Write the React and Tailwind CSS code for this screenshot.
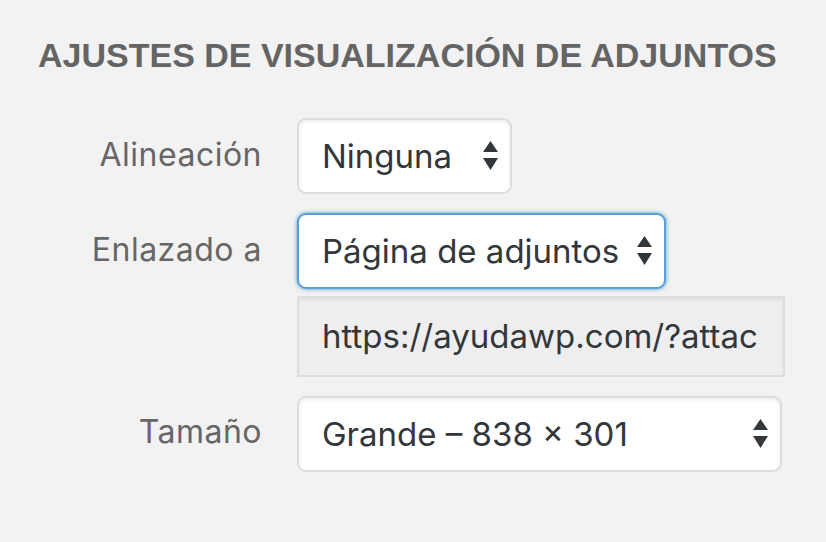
import React from "react";

function Arrows() {
  return (
    <svg width="15" height="30" viewBox="0 0 15 30" className="shrink-0">
      <polygon points="7.5,0 15,11 0,11" fill="#32373c" />
      <polygon points="0,17 15,17 7.5,29" fill="#32373c" />
    </svg>
  );
}

function Select({ text, width, focus }) {
  return (
    <div
      className={
        "flex h-[76px] items-center justify-between rounded-[9px] bg-white pl-[23px] pr-[12px] " +
        (focus
          ? "border-2 border-[#5b9dd9] shadow-[0_0_4px_rgba(30,140,190,0.8)]"
          : "border-2 border-[#dddddd] shadow-[inset_0_2px_4px_rgba(0,0,0,0.07)]")
      }
      style={{ width }}
    >
      <span className="whitespace-nowrap text-[33px] leading-none text-[#32373c]">{text}</span>
      <Arrows />
    </div>
  );
}

function Label({ children, pt }) {
  return (
    <div
      className={
        "w-[224px] shrink-0 text-right text-[32px] leading-none tracking-[0.5px] text-[#666666] " + pt
      }
    >
      {children}
    </div>
  );
}

export default function App() {
  return (
    <div
      className="h-[542px] w-[826px] overflow-hidden bg-[#f2f2f2] pl-[38px]"
      style={{ fontFamily: "Inter, 'Liberation Sans', sans-serif" }}
    >
      <h2
        className="pt-[38px] text-[34px] font-bold leading-none text-[#646464]"
        style={{ fontFamily: "'Liberation Sans', Arial, sans-serif" }}
      >
        AJUSTES DE VISUALIZACIÓN DE ADJUNTOS
      </h2>

      <div className="mt-[46px] flex items-start gap-[35px]">
        <Label pt="pt-[21px]">Alineación</Label>
        <Select text="Ninguna" width={215} />
      </div>

      <div className="mt-[19px] flex items-start gap-[35px]">
        <Label pt="pt-[21px]">Enlazado a</Label>
        <div className="flex flex-col gap-[7px]">
          <Select text="Página de adjuntos" width={369} focus />
          <div className="flex h-[81px] w-[488px] items-center border-2 border-[#dddddd] bg-[#eeeeee] pl-[23px] pr-[20px] shadow-[inset_0_2px_3px_rgba(0,0,0,0.06)]">
            <span className="whitespace-nowrap text-[33px] leading-none text-[#32373c]">
              https://ayudawp.com/?attac
            </span>
          </div>
        </div>
      </div>

      <div className="mt-[19px] flex items-start gap-[35px]">
        <Label pt="pt-[20px]">Tamaño</Label>
        <Select text="Grande – 838 × 301" width={485} />
      </div>
    </div>
  );
}
